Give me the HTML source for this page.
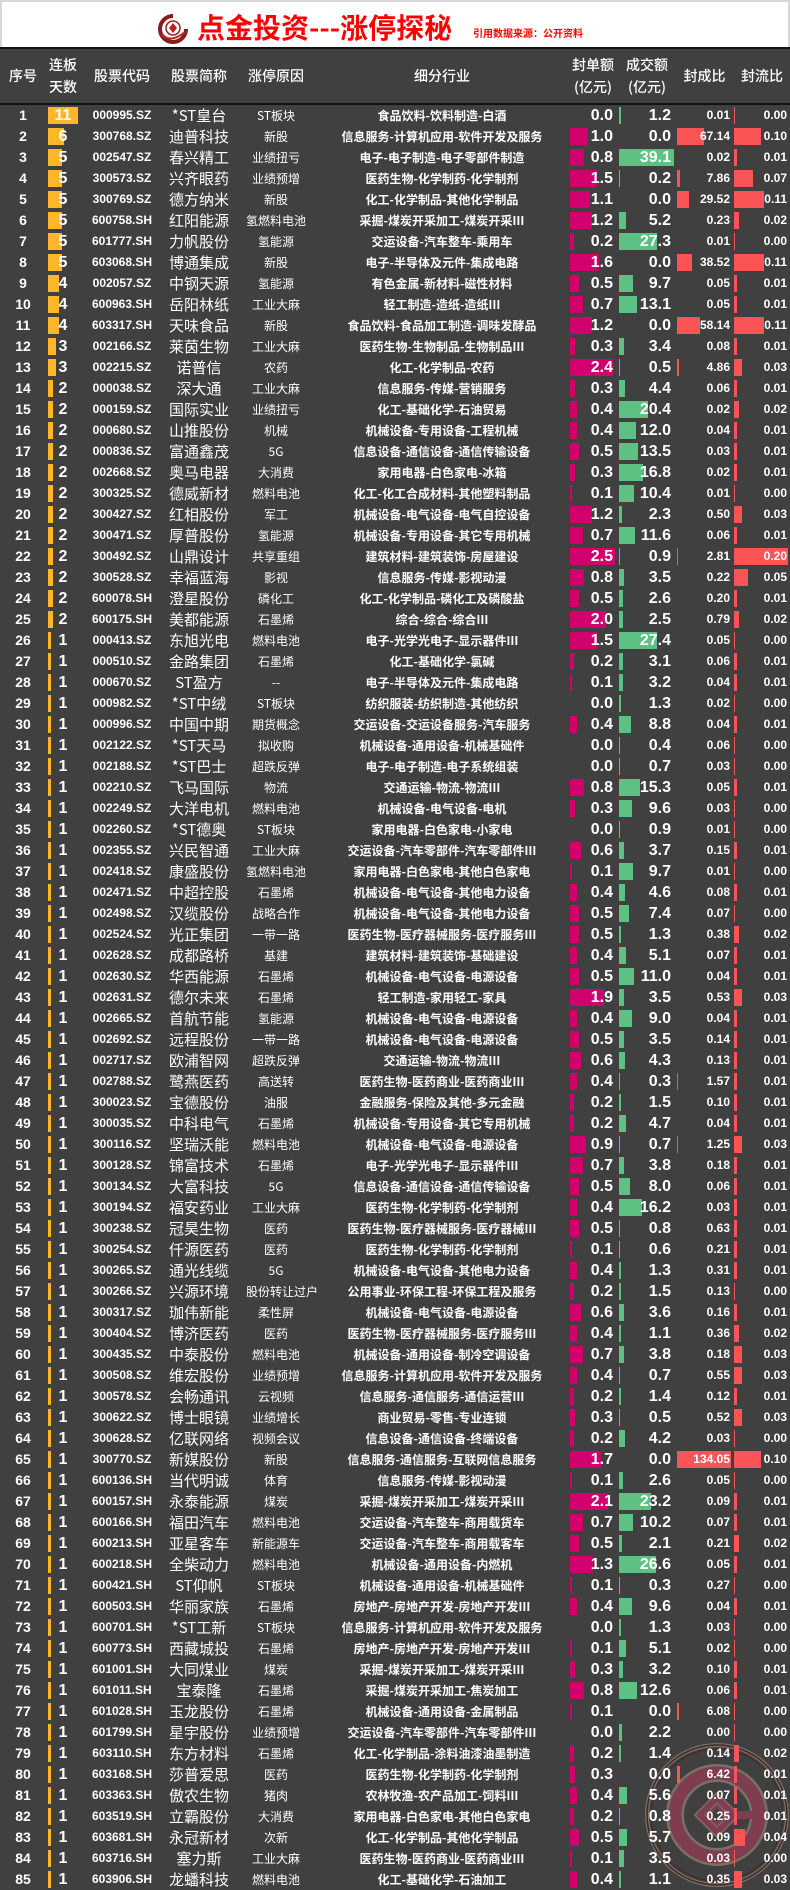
<!DOCTYPE html>
<html><head><meta charset="utf-8">
<style>
*{margin:0;padding:0;box-sizing:border-box}
body{width:790px;height:1890px;background:#404040;font-family:"Liberation Sans","Noto Sans CJK SC",sans-serif;color:#fff;overflow:hidden;position:relative}
#top{position:absolute;left:0;top:0;width:790px;height:47px;background:#fff;border-top:2px solid #d8d8d8;border-left:2px solid #d8d8d8;border-right:2px solid #d8d8d8}
#title{position:absolute;left:197px;top:9px;font-size:28px;font-weight:bold;color:#f00;white-space:nowrap;font-family:"Noto Sans CJK SC",sans-serif;line-height:36px}
#src{position:absolute;left:473px;top:25px;font-size:10px;font-weight:bold;color:#f00;font-family:"Noto Sans CJK SC",sans-serif}
#hd{position:absolute;left:0;top:47px;width:790px;height:58px;background:#404040;border-top:2px solid #111;border-bottom:2px solid #111;font-family:"Noto Sans CJK SC",sans-serif;font-weight:500;font-size:14px}
#hd span{position:absolute;top:0;height:54px;display:flex;align-items:center;justify-content:center;text-align:center;line-height:22px}
#rows{position:absolute;left:0;top:105px;width:790px}
.r{position:relative;height:21px;font-weight:bold}
.r span{position:absolute;top:0;height:21px;line-height:21px;white-space:nowrap}
.a{left:0;width:46px;text-align:center;font-size:14px}
.b{left:46px;width:34px;text-align:center;font-size:16px}
.b::before{content:"";position:absolute;left:2px;top:2px;height:17px;width:calc(var(--v)*2.7px);background:#ffb628;z-index:-1}
.b{z-index:1}
.c{left:90px;width:64px;text-align:center;font-size:12px}
.d{left:150px;width:98px;text-align:center;font-size:15px;font-weight:normal;font-family:"Noto Sans CJK SC",sans-serif}
.e{left:246px;width:60px;text-align:center;font-size:12px;font-weight:normal;font-family:"Noto Sans CJK SC",sans-serif}
.f{left:312px;width:260px;text-align:center;font-size:12px;font-family:"Noto Sans CJK SC",sans-serif}
.g,.h,.i,.j{text-align:right}
.g{left:570px;width:47px;padding-right:4px;font-size:16px}
.h{left:619px;width:56px;padding-right:4px;font-size:16px}
.i{left:677px;width:55px;padding-right:2px;font-size:12px}
.j{left:734px;width:56px;padding-right:3px;font-size:12px}
.g::before,.h::before,.i::before,.j::before{content:"";position:absolute;left:0;top:2px;height:17px;z-index:-1}
.g::before{width:calc(var(--v)*18px);background:#d2006e}
.h::before{width:calc(var(--v)*1.4px);background:#5ec184}
.i::before{width:calc(var(--v)*0.4px);background:#fa5457}
.j::before{width:max(1px,calc(var(--v)*270px));background:#fa5457}
.g,.h,.i,.j{z-index:1}
#wm{position:absolute;left:640px;top:1740px;opacity:.7}
</style></head><body>
<div id="top"></div>
<svg style="position:absolute;left:158px;top:14px" width="30" height="30" viewBox="0 0 30 30">
<path d="M15 2 A13 13 0 1 0 28 15" fill="none" stroke="#8b1a1a" stroke-width="4"/>
<path d="M4 20 Q12 30 27 18" fill="none" stroke="#a83030" stroke-width="2"/>
<circle cx="15" cy="14" r="7" fill="none" stroke="#9b2020" stroke-width="1.5"/>
<path d="M15 9 L19 14 L15 19 L11 14Z" fill="#c02020"/>
</svg>
<div id="title">点金投资---涨停探秘</div>
<div id="src">引用数据来源：公开资料</div>
<div id="hd">
<span style="left:0;width:46px">序号</span>
<span style="left:46px;width:34px">连板<br>天数</span>
<span style="left:90px;width:64px">股票代码</span>
<span style="left:150px;width:98px">股票简称</span>
<span style="left:246px;width:60px">涨停原因</span>
<span style="left:312px;width:260px">细分行业</span>
<span style="left:568px;width:50px">封单额<br>(亿元)</span>
<span style="left:620px;width:54px">成交额<br>(亿元)</span>
<span style="left:677px;width:55px">封成比</span>
<span style="left:734px;width:56px">封流比</span>
</div>
<div id="rows">
<div class="r"><span class="a">1</span><span class="b" style="--v:11">11</span><span class="c">000995.SZ</span><span class="d">*ST皇台</span><span class="e">ST板块</span><span class="f">食品饮料-饮料制造-白酒</span><span class="g" style="--v:0">0.0</span><span class="h" style="--v:1.2">1.2</span><span class="i" style="--v:0">0.01</span><span class="j" style="--v:0">0.00</span></div>
<div class="r"><span class="a">2</span><span class="b" style="--v:6">6</span><span class="c">300768.SZ</span><span class="d">迪普科技</span><span class="e">新股</span><span class="f">信息服务-计算机应用-软件开发及服务</span><span class="g" style="--v:1.0">1.0</span><span class="h" style="--v:0">0.0</span><span class="i" style="--v:67.14">67.14</span><span class="j" style="--v:0.10">0.10</span></div>
<div class="r"><span class="a">3</span><span class="b" style="--v:5">5</span><span class="c">002547.SZ</span><span class="d">春兴精工</span><span class="e">业绩扭亏</span><span class="f">电子-电子制造-电子零部件制造</span><span class="g" style="--v:0.8">0.8</span><span class="h" style="--v:39.1">39.1</span><span class="i" style="--v:0">0.02</span><span class="j" style="--v:0.01">0.01</span></div>
<div class="r"><span class="a">4</span><span class="b" style="--v:5">5</span><span class="c">300573.SZ</span><span class="d">兴齐眼药</span><span class="e">业绩预增</span><span class="f">医药生物-化学制药-化学制剂</span><span class="g" style="--v:1.5">1.5</span><span class="h" style="--v:0.2">0.2</span><span class="i" style="--v:7.86">7.86</span><span class="j" style="--v:0.07">0.07</span></div>
<div class="r"><span class="a">5</span><span class="b" style="--v:5">5</span><span class="c">300769.SZ</span><span class="d">德方纳米</span><span class="e">新股</span><span class="f">化工-化学制品-其他化学制品</span><span class="g" style="--v:1.1">1.1</span><span class="h" style="--v:0">0.0</span><span class="i" style="--v:29.52">29.52</span><span class="j" style="--v:0.11">0.11</span></div>
<div class="r"><span class="a">6</span><span class="b" style="--v:5">5</span><span class="c">600758.SH</span><span class="d">红阳能源</span><span class="e">氢燃料电池</span><span class="f">采掘-煤炭开采加工-煤炭开采Ⅲ</span><span class="g" style="--v:1.2">1.2</span><span class="h" style="--v:5.2">5.2</span><span class="i" style="--v:0">0.23</span><span class="j" style="--v:0.02">0.02</span></div>
<div class="r"><span class="a">7</span><span class="b" style="--v:5">5</span><span class="c">601777.SH</span><span class="d">力帆股份</span><span class="e">氢能源</span><span class="f">交运设备-汽车整车-乘用车</span><span class="g" style="--v:0.2">0.2</span><span class="h" style="--v:27.3">27.3</span><span class="i" style="--v:0">0.01</span><span class="j" style="--v:0">0.00</span></div>
<div class="r"><span class="a">8</span><span class="b" style="--v:5">5</span><span class="c">603068.SH</span><span class="d">博通集成</span><span class="e">新股</span><span class="f">电子-半导体及元件-集成电路</span><span class="g" style="--v:1.6">1.6</span><span class="h" style="--v:0">0.0</span><span class="i" style="--v:38.52">38.52</span><span class="j" style="--v:0.11">0.11</span></div>
<div class="r"><span class="a">9</span><span class="b" style="--v:4">4</span><span class="c">002057.SZ</span><span class="d">中钢天源</span><span class="e">氢能源</span><span class="f">有色金属-新材料-磁性材料</span><span class="g" style="--v:0.5">0.5</span><span class="h" style="--v:9.7">9.7</span><span class="i" style="--v:0">0.05</span><span class="j" style="--v:0.01">0.01</span></div>
<div class="r"><span class="a">10</span><span class="b" style="--v:4">4</span><span class="c">600963.SH</span><span class="d">岳阳林纸</span><span class="e">工业大麻</span><span class="f">轻工制造-造纸-造纸Ⅲ</span><span class="g" style="--v:0.7">0.7</span><span class="h" style="--v:13.1">13.1</span><span class="i" style="--v:0">0.05</span><span class="j" style="--v:0.01">0.01</span></div>
<div class="r"><span class="a">11</span><span class="b" style="--v:4">4</span><span class="c">603317.SH</span><span class="d">天味食品</span><span class="e">新股</span><span class="f">食品饮料-食品加工制造-调味发酵品</span><span class="g" style="--v:1.2">1.2</span><span class="h" style="--v:0">0.0</span><span class="i" style="--v:58.14">58.14</span><span class="j" style="--v:0.11">0.11</span></div>
<div class="r"><span class="a">12</span><span class="b" style="--v:3">3</span><span class="c">002166.SZ</span><span class="d">莱茵生物</span><span class="e">工业大麻</span><span class="f">医药生物-生物制品-生物制品Ⅲ</span><span class="g" style="--v:0.3">0.3</span><span class="h" style="--v:3.4">3.4</span><span class="i" style="--v:0">0.08</span><span class="j" style="--v:0.01">0.01</span></div>
<div class="r"><span class="a">13</span><span class="b" style="--v:3">3</span><span class="c">002215.SZ</span><span class="d">诺普信</span><span class="e">农药</span><span class="f">化工-化学制品-农药</span><span class="g" style="--v:2.4">2.4</span><span class="h" style="--v:0.5">0.5</span><span class="i" style="--v:4.86">4.86</span><span class="j" style="--v:0.03">0.03</span></div>
<div class="r"><span class="a">14</span><span class="b" style="--v:2">2</span><span class="c">000038.SZ</span><span class="d">深大通</span><span class="e">工业大麻</span><span class="f">信息服务-传媒-营销服务</span><span class="g" style="--v:0.3">0.3</span><span class="h" style="--v:4.4">4.4</span><span class="i" style="--v:0">0.06</span><span class="j" style="--v:0.01">0.01</span></div>
<div class="r"><span class="a">15</span><span class="b" style="--v:2">2</span><span class="c">000159.SZ</span><span class="d">国际实业</span><span class="e">业绩扭亏</span><span class="f">化工-基础化学-石油贸易</span><span class="g" style="--v:0.4">0.4</span><span class="h" style="--v:20.4">20.4</span><span class="i" style="--v:0">0.02</span><span class="j" style="--v:0.02">0.02</span></div>
<div class="r"><span class="a">16</span><span class="b" style="--v:2">2</span><span class="c">000680.SZ</span><span class="d">山推股份</span><span class="e">机械</span><span class="f">机械设备-专用设备-工程机械</span><span class="g" style="--v:0.4">0.4</span><span class="h" style="--v:12.0">12.0</span><span class="i" style="--v:0">0.04</span><span class="j" style="--v:0.01">0.01</span></div>
<div class="r"><span class="a">17</span><span class="b" style="--v:2">2</span><span class="c">000836.SZ</span><span class="d">富通鑫茂</span><span class="e">5G</span><span class="f">信息设备-通信设备-通信传输设备</span><span class="g" style="--v:0.5">0.5</span><span class="h" style="--v:13.5">13.5</span><span class="i" style="--v:0">0.03</span><span class="j" style="--v:0.01">0.01</span></div>
<div class="r"><span class="a">18</span><span class="b" style="--v:2">2</span><span class="c">002668.SZ</span><span class="d">奥马电器</span><span class="e">大消费</span><span class="f">家用电器-白色家电-冰箱</span><span class="g" style="--v:0.3">0.3</span><span class="h" style="--v:16.8">16.8</span><span class="i" style="--v:0">0.02</span><span class="j" style="--v:0.01">0.01</span></div>
<div class="r"><span class="a">19</span><span class="b" style="--v:2">2</span><span class="c">300325.SZ</span><span class="d">德威新材</span><span class="e">燃料电池</span><span class="f">化工-化工合成材料-其他塑料制品</span><span class="g" style="--v:0.1">0.1</span><span class="h" style="--v:10.4">10.4</span><span class="i" style="--v:0">0.01</span><span class="j" style="--v:0">0.00</span></div>
<div class="r"><span class="a">20</span><span class="b" style="--v:2">2</span><span class="c">300427.SZ</span><span class="d">红相股份</span><span class="e">军工</span><span class="f">机械设备-电气设备-电气自控设备</span><span class="g" style="--v:1.2">1.2</span><span class="h" style="--v:2.3">2.3</span><span class="i" style="--v:0">0.50</span><span class="j" style="--v:0.03">0.03</span></div>
<div class="r"><span class="a">21</span><span class="b" style="--v:2">2</span><span class="c">300471.SZ</span><span class="d">厚普股份</span><span class="e">氢能源</span><span class="f">机械设备-专用设备-其它专用机械</span><span class="g" style="--v:0.7">0.7</span><span class="h" style="--v:11.6">11.6</span><span class="i" style="--v:0">0.06</span><span class="j" style="--v:0.01">0.01</span></div>
<div class="r"><span class="a">22</span><span class="b" style="--v:2">2</span><span class="c">300492.SZ</span><span class="d">山鼎设计</span><span class="e">共享重组</span><span class="f">建筑材料-建筑装饰-房屋建设</span><span class="g" style="--v:2.5">2.5</span><span class="h" style="--v:0.9">0.9</span><span class="i" style="--v:2.81">2.81</span><span class="j" style="--v:0.20">0.20</span></div>
<div class="r"><span class="a">23</span><span class="b" style="--v:2">2</span><span class="c">300528.SZ</span><span class="d">幸福蓝海</span><span class="e">影视</span><span class="f">信息服务-传媒-影视动漫</span><span class="g" style="--v:0.8">0.8</span><span class="h" style="--v:3.5">3.5</span><span class="i" style="--v:0">0.22</span><span class="j" style="--v:0.05">0.05</span></div>
<div class="r"><span class="a">24</span><span class="b" style="--v:2">2</span><span class="c">600078.SH</span><span class="d">澄星股份</span><span class="e">磷化工</span><span class="f">化工-化学制品-磷化工及磷酸盐</span><span class="g" style="--v:0.5">0.5</span><span class="h" style="--v:2.6">2.6</span><span class="i" style="--v:0">0.20</span><span class="j" style="--v:0.01">0.01</span></div>
<div class="r"><span class="a">25</span><span class="b" style="--v:2">2</span><span class="c">600175.SH</span><span class="d">美都能源</span><span class="e">石墨烯</span><span class="f">综合-综合-综合Ⅲ</span><span class="g" style="--v:2.0">2.0</span><span class="h" style="--v:2.5">2.5</span><span class="i" style="--v:0">0.79</span><span class="j" style="--v:0.02">0.02</span></div>
<div class="r"><span class="a">26</span><span class="b" style="--v:1">1</span><span class="c">000413.SZ</span><span class="d">东旭光电</span><span class="e">燃料电池</span><span class="f">电子-光学光电子-显示器件Ⅲ</span><span class="g" style="--v:1.5">1.5</span><span class="h" style="--v:27.4">27.4</span><span class="i" style="--v:0">0.05</span><span class="j" style="--v:0">0.00</span></div>
<div class="r"><span class="a">27</span><span class="b" style="--v:1">1</span><span class="c">000510.SZ</span><span class="d">金路集团</span><span class="e">石墨烯</span><span class="f">化工-基础化学-氯碱</span><span class="g" style="--v:0.2">0.2</span><span class="h" style="--v:3.1">3.1</span><span class="i" style="--v:0">0.06</span><span class="j" style="--v:0.01">0.01</span></div>
<div class="r"><span class="a">28</span><span class="b" style="--v:1">1</span><span class="c">000670.SZ</span><span class="d">ST盈方</span><span class="e">--</span><span class="f">电子-半导体及元件-集成电路</span><span class="g" style="--v:0.1">0.1</span><span class="h" style="--v:3.2">3.2</span><span class="i" style="--v:0">0.04</span><span class="j" style="--v:0.01">0.01</span></div>
<div class="r"><span class="a">29</span><span class="b" style="--v:1">1</span><span class="c">000982.SZ</span><span class="d">*ST中绒</span><span class="e">ST板块</span><span class="f">纺织服装-纺织制造-其他纺织</span><span class="g" style="--v:0">0.0</span><span class="h" style="--v:1.3">1.3</span><span class="i" style="--v:0">0.02</span><span class="j" style="--v:0">0.00</span></div>
<div class="r"><span class="a">30</span><span class="b" style="--v:1">1</span><span class="c">000996.SZ</span><span class="d">中国中期</span><span class="e">期货概念</span><span class="f">交运设备-交运设备服务-汽车服务</span><span class="g" style="--v:0.4">0.4</span><span class="h" style="--v:8.8">8.8</span><span class="i" style="--v:0">0.04</span><span class="j" style="--v:0.01">0.01</span></div>
<div class="r"><span class="a">31</span><span class="b" style="--v:1">1</span><span class="c">002122.SZ</span><span class="d">*ST天马</span><span class="e">拟收购</span><span class="f">机械设备-通用设备-机械基础件</span><span class="g" style="--v:0">0.0</span><span class="h" style="--v:0.4">0.4</span><span class="i" style="--v:0">0.06</span><span class="j" style="--v:0">0.00</span></div>
<div class="r"><span class="a">32</span><span class="b" style="--v:1">1</span><span class="c">002188.SZ</span><span class="d">*ST巴士</span><span class="e">超跌反弹</span><span class="f">电子-电子制造-电子系统组装</span><span class="g" style="--v:0">0.0</span><span class="h" style="--v:0.7">0.7</span><span class="i" style="--v:0">0.03</span><span class="j" style="--v:0">0.00</span></div>
<div class="r"><span class="a">33</span><span class="b" style="--v:1">1</span><span class="c">002210.SZ</span><span class="d">飞马国际</span><span class="e">物流</span><span class="f">交通运输-物流-物流Ⅲ</span><span class="g" style="--v:0.8">0.8</span><span class="h" style="--v:15.3">15.3</span><span class="i" style="--v:0">0.05</span><span class="j" style="--v:0.01">0.01</span></div>
<div class="r"><span class="a">34</span><span class="b" style="--v:1">1</span><span class="c">002249.SZ</span><span class="d">大洋电机</span><span class="e">燃料电池</span><span class="f">机械设备-电气设备-电机</span><span class="g" style="--v:0.3">0.3</span><span class="h" style="--v:9.6">9.6</span><span class="i" style="--v:0">0.03</span><span class="j" style="--v:0">0.00</span></div>
<div class="r"><span class="a">35</span><span class="b" style="--v:1">1</span><span class="c">002260.SZ</span><span class="d">*ST德奥</span><span class="e">ST板块</span><span class="f">家用电器-白色家电-小家电</span><span class="g" style="--v:0">0.0</span><span class="h" style="--v:0.9">0.9</span><span class="i" style="--v:0">0.01</span><span class="j" style="--v:0">0.00</span></div>
<div class="r"><span class="a">36</span><span class="b" style="--v:1">1</span><span class="c">002355.SZ</span><span class="d">兴民智通</span><span class="e">工业大麻</span><span class="f">交运设备-汽车零部件-汽车零部件Ⅲ</span><span class="g" style="--v:0.6">0.6</span><span class="h" style="--v:3.7">3.7</span><span class="i" style="--v:0">0.15</span><span class="j" style="--v:0.01">0.01</span></div>
<div class="r"><span class="a">37</span><span class="b" style="--v:1">1</span><span class="c">002418.SZ</span><span class="d">康盛股份</span><span class="e">氢燃料电池</span><span class="f">家用电器-白色家电-其他白色家电</span><span class="g" style="--v:0.1">0.1</span><span class="h" style="--v:9.7">9.7</span><span class="i" style="--v:0">0.01</span><span class="j" style="--v:0">0.00</span></div>
<div class="r"><span class="a">38</span><span class="b" style="--v:1">1</span><span class="c">002471.SZ</span><span class="d">中超控股</span><span class="e">石墨烯</span><span class="f">机械设备-电气设备-其他电力设备</span><span class="g" style="--v:0.4">0.4</span><span class="h" style="--v:4.6">4.6</span><span class="i" style="--v:0">0.08</span><span class="j" style="--v:0.01">0.01</span></div>
<div class="r"><span class="a">39</span><span class="b" style="--v:1">1</span><span class="c">002498.SZ</span><span class="d">汉缆股份</span><span class="e">战略合作</span><span class="f">机械设备-电气设备-其他电力设备</span><span class="g" style="--v:0.5">0.5</span><span class="h" style="--v:7.4">7.4</span><span class="i" style="--v:0">0.07</span><span class="j" style="--v:0">0.00</span></div>
<div class="r"><span class="a">40</span><span class="b" style="--v:1">1</span><span class="c">002524.SZ</span><span class="d">光正集团</span><span class="e">一带一路</span><span class="f">医药生物-医疗器械服务-医疗服务Ⅲ</span><span class="g" style="--v:0.5">0.5</span><span class="h" style="--v:1.3">1.3</span><span class="i" style="--v:0">0.38</span><span class="j" style="--v:0.02">0.02</span></div>
<div class="r"><span class="a">41</span><span class="b" style="--v:1">1</span><span class="c">002628.SZ</span><span class="d">成都路桥</span><span class="e">基建</span><span class="f">建筑材料-建筑装饰-基础建设</span><span class="g" style="--v:0.4">0.4</span><span class="h" style="--v:5.1">5.1</span><span class="i" style="--v:0">0.07</span><span class="j" style="--v:0.01">0.01</span></div>
<div class="r"><span class="a">42</span><span class="b" style="--v:1">1</span><span class="c">002630.SZ</span><span class="d">华西能源</span><span class="e">石墨烯</span><span class="f">机械设备-电气设备-电源设备</span><span class="g" style="--v:0.5">0.5</span><span class="h" style="--v:11.0">11.0</span><span class="i" style="--v:0">0.04</span><span class="j" style="--v:0.01">0.01</span></div>
<div class="r"><span class="a">43</span><span class="b" style="--v:1">1</span><span class="c">002631.SZ</span><span class="d">德尔未来</span><span class="e">石墨烯</span><span class="f">轻工制造-家用轻工-家具</span><span class="g" style="--v:1.9">1.9</span><span class="h" style="--v:3.5">3.5</span><span class="i" style="--v:0">0.53</span><span class="j" style="--v:0.03">0.03</span></div>
<div class="r"><span class="a">44</span><span class="b" style="--v:1">1</span><span class="c">002665.SZ</span><span class="d">首航节能</span><span class="e">氢能源</span><span class="f">机械设备-电气设备-电源设备</span><span class="g" style="--v:0.4">0.4</span><span class="h" style="--v:9.0">9.0</span><span class="i" style="--v:0">0.04</span><span class="j" style="--v:0.01">0.01</span></div>
<div class="r"><span class="a">45</span><span class="b" style="--v:1">1</span><span class="c">002692.SZ</span><span class="d">远程股份</span><span class="e">一带一路</span><span class="f">机械设备-电气设备-电源设备</span><span class="g" style="--v:0.5">0.5</span><span class="h" style="--v:3.5">3.5</span><span class="i" style="--v:0">0.14</span><span class="j" style="--v:0.01">0.01</span></div>
<div class="r"><span class="a">46</span><span class="b" style="--v:1">1</span><span class="c">002717.SZ</span><span class="d">欧浦智网</span><span class="e">超跌反弹</span><span class="f">交通运输-物流-物流Ⅲ</span><span class="g" style="--v:0.6">0.6</span><span class="h" style="--v:4.3">4.3</span><span class="i" style="--v:0">0.13</span><span class="j" style="--v:0.01">0.01</span></div>
<div class="r"><span class="a">47</span><span class="b" style="--v:1">1</span><span class="c">002788.SZ</span><span class="d">鹭燕医药</span><span class="e">高送转</span><span class="f">医药生物-医药商业-医药商业Ⅲ</span><span class="g" style="--v:0.4">0.4</span><span class="h" style="--v:0.3">0.3</span><span class="i" style="--v:1.57">1.57</span><span class="j" style="--v:0.01">0.01</span></div>
<div class="r"><span class="a">48</span><span class="b" style="--v:1">1</span><span class="c">300023.SZ</span><span class="d">宝德股份</span><span class="e">油服</span><span class="f">金融服务-保险及其他-多元金融</span><span class="g" style="--v:0.2">0.2</span><span class="h" style="--v:1.5">1.5</span><span class="i" style="--v:0">0.10</span><span class="j" style="--v:0.01">0.01</span></div>
<div class="r"><span class="a">49</span><span class="b" style="--v:1">1</span><span class="c">300035.SZ</span><span class="d">中科电气</span><span class="e">石墨烯</span><span class="f">机械设备-专用设备-其它专用机械</span><span class="g" style="--v:0.2">0.2</span><span class="h" style="--v:4.7">4.7</span><span class="i" style="--v:0">0.04</span><span class="j" style="--v:0.01">0.01</span></div>
<div class="r"><span class="a">50</span><span class="b" style="--v:1">1</span><span class="c">300116.SZ</span><span class="d">坚瑞沃能</span><span class="e">燃料电池</span><span class="f">机械设备-电气设备-电源设备</span><span class="g" style="--v:0.9">0.9</span><span class="h" style="--v:0.7">0.7</span><span class="i" style="--v:1.25">1.25</span><span class="j" style="--v:0.03">0.03</span></div>
<div class="r"><span class="a">51</span><span class="b" style="--v:1">1</span><span class="c">300128.SZ</span><span class="d">锦富技术</span><span class="e">石墨烯</span><span class="f">电子-光学光电子-显示器件Ⅲ</span><span class="g" style="--v:0.7">0.7</span><span class="h" style="--v:3.8">3.8</span><span class="i" style="--v:0">0.18</span><span class="j" style="--v:0.01">0.01</span></div>
<div class="r"><span class="a">52</span><span class="b" style="--v:1">1</span><span class="c">300134.SZ</span><span class="d">大富科技</span><span class="e">5G</span><span class="f">信息设备-通信设备-通信传输设备</span><span class="g" style="--v:0.5">0.5</span><span class="h" style="--v:8.0">8.0</span><span class="i" style="--v:0">0.06</span><span class="j" style="--v:0.01">0.01</span></div>
<div class="r"><span class="a">53</span><span class="b" style="--v:1">1</span><span class="c">300194.SZ</span><span class="d">福安药业</span><span class="e">工业大麻</span><span class="f">医药生物-化学制药-化学制剂</span><span class="g" style="--v:0.4">0.4</span><span class="h" style="--v:16.2">16.2</span><span class="i" style="--v:0">0.03</span><span class="j" style="--v:0.01">0.01</span></div>
<div class="r"><span class="a">54</span><span class="b" style="--v:1">1</span><span class="c">300238.SZ</span><span class="d">冠昊生物</span><span class="e">医药</span><span class="f">医药生物-医疗器械服务-医疗器械Ⅲ</span><span class="g" style="--v:0.5">0.5</span><span class="h" style="--v:0.8">0.8</span><span class="i" style="--v:0">0.63</span><span class="j" style="--v:0.01">0.01</span></div>
<div class="r"><span class="a">55</span><span class="b" style="--v:1">1</span><span class="c">300254.SZ</span><span class="d">仟源医药</span><span class="e">医药</span><span class="f">医药生物-化学制药-化学制剂</span><span class="g" style="--v:0.1">0.1</span><span class="h" style="--v:0.6">0.6</span><span class="i" style="--v:0">0.21</span><span class="j" style="--v:0.01">0.01</span></div>
<div class="r"><span class="a">56</span><span class="b" style="--v:1">1</span><span class="c">300265.SZ</span><span class="d">通光线缆</span><span class="e">5G</span><span class="f">机械设备-电气设备-其他电力设备</span><span class="g" style="--v:0.4">0.4</span><span class="h" style="--v:1.3">1.3</span><span class="i" style="--v:0">0.31</span><span class="j" style="--v:0.01">0.01</span></div>
<div class="r"><span class="a">57</span><span class="b" style="--v:1">1</span><span class="c">300266.SZ</span><span class="d">兴源环境</span><span class="e">股份转让过户</span><span class="f">公用事业-环保工程-环保工程及服务</span><span class="g" style="--v:0.2">0.2</span><span class="h" style="--v:1.5">1.5</span><span class="i" style="--v:0">0.13</span><span class="j" style="--v:0">0.00</span></div>
<div class="r"><span class="a">58</span><span class="b" style="--v:1">1</span><span class="c">300317.SZ</span><span class="d">珈伟新能</span><span class="e">柔性屏</span><span class="f">机械设备-电气设备-电源设备</span><span class="g" style="--v:0.6">0.6</span><span class="h" style="--v:3.6">3.6</span><span class="i" style="--v:0">0.16</span><span class="j" style="--v:0.01">0.01</span></div>
<div class="r"><span class="a">59</span><span class="b" style="--v:1">1</span><span class="c">300404.SZ</span><span class="d">博济医药</span><span class="e">医药</span><span class="f">医药生物-医疗器械服务-医疗服务Ⅲ</span><span class="g" style="--v:0.4">0.4</span><span class="h" style="--v:1.1">1.1</span><span class="i" style="--v:0">0.36</span><span class="j" style="--v:0.02">0.02</span></div>
<div class="r"><span class="a">60</span><span class="b" style="--v:1">1</span><span class="c">300435.SZ</span><span class="d">中泰股份</span><span class="e">燃料电池</span><span class="f">机械设备-通用设备-制冷空调设备</span><span class="g" style="--v:0.7">0.7</span><span class="h" style="--v:3.8">3.8</span><span class="i" style="--v:0">0.18</span><span class="j" style="--v:0.03">0.03</span></div>
<div class="r"><span class="a">61</span><span class="b" style="--v:1">1</span><span class="c">300508.SZ</span><span class="d">维宏股份</span><span class="e">业绩预增</span><span class="f">信息服务-计算机应用-软件开发及服务</span><span class="g" style="--v:0.4">0.4</span><span class="h" style="--v:0.7">0.7</span><span class="i" style="--v:0">0.55</span><span class="j" style="--v:0.03">0.03</span></div>
<div class="r"><span class="a">62</span><span class="b" style="--v:1">1</span><span class="c">300578.SZ</span><span class="d">会畅通讯</span><span class="e">云视频</span><span class="f">信息服务-通信服务-通信运营Ⅲ</span><span class="g" style="--v:0.2">0.2</span><span class="h" style="--v:1.4">1.4</span><span class="i" style="--v:0">0.12</span><span class="j" style="--v:0.01">0.01</span></div>
<div class="r"><span class="a">63</span><span class="b" style="--v:1">1</span><span class="c">300622.SZ</span><span class="d">博士眼镜</span><span class="e">业绩增长</span><span class="f">商业贸易-零售-专业连锁</span><span class="g" style="--v:0.3">0.3</span><span class="h" style="--v:0.5">0.5</span><span class="i" style="--v:0">0.52</span><span class="j" style="--v:0.03">0.03</span></div>
<div class="r"><span class="a">64</span><span class="b" style="--v:1">1</span><span class="c">300628.SZ</span><span class="d">亿联网络</span><span class="e">视频会议</span><span class="f">信息设备-通信设备-终端设备</span><span class="g" style="--v:0.2">0.2</span><span class="h" style="--v:4.2">4.2</span><span class="i" style="--v:0">0.03</span><span class="j" style="--v:0">0.00</span></div>
<div class="r"><span class="a">65</span><span class="b" style="--v:1">1</span><span class="c">300770.SZ</span><span class="d">新媒股份</span><span class="e">新股</span><span class="f">信息服务-通信服务-互联网信息服务</span><span class="g" style="--v:1.7">1.7</span><span class="h" style="--v:0">0.0</span><span class="i" style="--v:134.05">134.05</span><span class="j" style="--v:0.10">0.10</span></div>
<div class="r"><span class="a">66</span><span class="b" style="--v:1">1</span><span class="c">600136.SH</span><span class="d">当代明诚</span><span class="e">体育</span><span class="f">信息服务-传媒-影视动漫</span><span class="g" style="--v:0.1">0.1</span><span class="h" style="--v:2.6">2.6</span><span class="i" style="--v:0">0.05</span><span class="j" style="--v:0">0.00</span></div>
<div class="r"><span class="a">67</span><span class="b" style="--v:1">1</span><span class="c">600157.SH</span><span class="d">永泰能源</span><span class="e">煤炭</span><span class="f">采掘-煤炭开采加工-煤炭开采Ⅲ</span><span class="g" style="--v:2.1">2.1</span><span class="h" style="--v:23.2">23.2</span><span class="i" style="--v:0">0.09</span><span class="j" style="--v:0.01">0.01</span></div>
<div class="r"><span class="a">68</span><span class="b" style="--v:1">1</span><span class="c">600166.SH</span><span class="d">福田汽车</span><span class="e">燃料电池</span><span class="f">交运设备-汽车整车-商用载货车</span><span class="g" style="--v:0.7">0.7</span><span class="h" style="--v:10.2">10.2</span><span class="i" style="--v:0">0.07</span><span class="j" style="--v:0.01">0.01</span></div>
<div class="r"><span class="a">69</span><span class="b" style="--v:1">1</span><span class="c">600213.SH</span><span class="d">亚星客车</span><span class="e">新能源车</span><span class="f">交运设备-汽车整车-商用载客车</span><span class="g" style="--v:0.5">0.5</span><span class="h" style="--v:2.1">2.1</span><span class="i" style="--v:0">0.21</span><span class="j" style="--v:0.02">0.02</span></div>
<div class="r"><span class="a">70</span><span class="b" style="--v:1">1</span><span class="c">600218.SH</span><span class="d">全柴动力</span><span class="e">燃料电池</span><span class="f">机械设备-通用设备-内燃机</span><span class="g" style="--v:1.3">1.3</span><span class="h" style="--v:26.6">26.6</span><span class="i" style="--v:0">0.05</span><span class="j" style="--v:0.01">0.01</span></div>
<div class="r"><span class="a">71</span><span class="b" style="--v:1">1</span><span class="c">600421.SH</span><span class="d">ST仰帆</span><span class="e">ST板块</span><span class="f">机械设备-通用设备-机械基础件</span><span class="g" style="--v:0.1">0.1</span><span class="h" style="--v:0.3">0.3</span><span class="i" style="--v:0">0.27</span><span class="j" style="--v:0">0.00</span></div>
<div class="r"><span class="a">72</span><span class="b" style="--v:1">1</span><span class="c">600503.SH</span><span class="d">华丽家族</span><span class="e">石墨烯</span><span class="f">房地产-房地产开发-房地产开发Ⅲ</span><span class="g" style="--v:0.4">0.4</span><span class="h" style="--v:9.6">9.6</span><span class="i" style="--v:0">0.04</span><span class="j" style="--v:0.01">0.01</span></div>
<div class="r"><span class="a">73</span><span class="b" style="--v:1">1</span><span class="c">600701.SH</span><span class="d">*ST工新</span><span class="e">ST板块</span><span class="f">信息服务-计算机应用-软件开发及服务</span><span class="g" style="--v:0">0.0</span><span class="h" style="--v:1.3">1.3</span><span class="i" style="--v:0">0.03</span><span class="j" style="--v:0">0.00</span></div>
<div class="r"><span class="a">74</span><span class="b" style="--v:1">1</span><span class="c">600773.SH</span><span class="d">西藏城投</span><span class="e">石墨烯</span><span class="f">房地产-房地产开发-房地产开发Ⅲ</span><span class="g" style="--v:0.1">0.1</span><span class="h" style="--v:5.1">5.1</span><span class="i" style="--v:0">0.02</span><span class="j" style="--v:0">0.00</span></div>
<div class="r"><span class="a">75</span><span class="b" style="--v:1">1</span><span class="c">601001.SH</span><span class="d">大同煤业</span><span class="e">煤炭</span><span class="f">采掘-煤炭开采加工-煤炭开采Ⅲ</span><span class="g" style="--v:0.3">0.3</span><span class="h" style="--v:3.2">3.2</span><span class="i" style="--v:0">0.10</span><span class="j" style="--v:0.01">0.01</span></div>
<div class="r"><span class="a">76</span><span class="b" style="--v:1">1</span><span class="c">601011.SH</span><span class="d">宝泰隆</span><span class="e">石墨烯</span><span class="f">采掘-煤炭开采加工-焦炭加工</span><span class="g" style="--v:0.8">0.8</span><span class="h" style="--v:12.6">12.6</span><span class="i" style="--v:0">0.06</span><span class="j" style="--v:0.01">0.01</span></div>
<div class="r"><span class="a">77</span><span class="b" style="--v:1">1</span><span class="c">601028.SH</span><span class="d">玉龙股份</span><span class="e">石墨烯</span><span class="f">机械设备-通用设备-金属制品</span><span class="g" style="--v:0.1">0.1</span><span class="h" style="--v:0">0.0</span><span class="i" style="--v:6.08">6.08</span><span class="j" style="--v:0">0.00</span></div>
<div class="r"><span class="a">78</span><span class="b" style="--v:1">1</span><span class="c">601799.SH</span><span class="d">星宇股份</span><span class="e">业绩预增</span><span class="f">交运设备-汽车零部件-汽车零部件Ⅲ</span><span class="g" style="--v:0">0.0</span><span class="h" style="--v:2.2">2.2</span><span class="i" style="--v:0">0.00</span><span class="j" style="--v:0">0.00</span></div>
<div class="r"><span class="a">79</span><span class="b" style="--v:1">1</span><span class="c">603110.SH</span><span class="d">东方材料</span><span class="e">石墨烯</span><span class="f">化工-化学制品-涂料油漆油墨制造</span><span class="g" style="--v:0.2">0.2</span><span class="h" style="--v:1.4">1.4</span><span class="i" style="--v:0">0.14</span><span class="j" style="--v:0.02">0.02</span></div>
<div class="r"><span class="a">80</span><span class="b" style="--v:1">1</span><span class="c">603168.SH</span><span class="d">莎普爱思</span><span class="e">医药</span><span class="f">医药生物-化学制药-化学制剂</span><span class="g" style="--v:0.3">0.3</span><span class="h" style="--v:0">0.0</span><span class="i" style="--v:6.42">6.42</span><span class="j" style="--v:0.01">0.01</span></div>
<div class="r"><span class="a">81</span><span class="b" style="--v:1">1</span><span class="c">603363.SH</span><span class="d">傲农生物</span><span class="e">猪肉</span><span class="f">农林牧渔-农产品加工-饲料Ⅲ</span><span class="g" style="--v:0.4">0.4</span><span class="h" style="--v:5.6">5.6</span><span class="i" style="--v:0">0.07</span><span class="j" style="--v:0.01">0.01</span></div>
<div class="r"><span class="a">82</span><span class="b" style="--v:1">1</span><span class="c">603519.SH</span><span class="d">立霸股份</span><span class="e">大消费</span><span class="f">家用电器-白色家电-其他白色家电</span><span class="g" style="--v:0.2">0.2</span><span class="h" style="--v:0.8">0.8</span><span class="i" style="--v:0">0.25</span><span class="j" style="--v:0.01">0.01</span></div>
<div class="r"><span class="a">83</span><span class="b" style="--v:1">1</span><span class="c">603681.SH</span><span class="d">永冠新材</span><span class="e">次新</span><span class="f">化工-化学制品-其他化学制品</span><span class="g" style="--v:0.5">0.5</span><span class="h" style="--v:5.7">5.7</span><span class="i" style="--v:0">0.09</span><span class="j" style="--v:0.04">0.04</span></div>
<div class="r"><span class="a">84</span><span class="b" style="--v:1">1</span><span class="c">603716.SH</span><span class="d">塞力斯</span><span class="e">工业大麻</span><span class="f">医药生物-医药商业-医药商业Ⅲ</span><span class="g" style="--v:0.1">0.1</span><span class="h" style="--v:3.5">3.5</span><span class="i" style="--v:0">0.03</span><span class="j" style="--v:0">0.00</span></div>
<div class="r"><span class="a">85</span><span class="b" style="--v:1">1</span><span class="c">603906.SH</span><span class="d">龙蟠科技</span><span class="e">燃料电池</span><span class="f">化工-基础化学-石油加工</span><span class="g" style="--v:0.4">0.4</span><span class="h" style="--v:1.1">1.1</span><span class="i" style="--v:0">0.35</span><span class="j" style="--v:0.03">0.03</span></div>
</div>
<svg id="wm" width="150" height="150" viewBox="0 0 150 150">
<circle cx="77" cy="75" r="70" fill="none" stroke="#d9d0a8" stroke-width="4" opacity=".5"/>
<circle cx="77" cy="75" r="70" fill="none" stroke="#4a1a22" stroke-width="1.5"/>
<circle cx="77" cy="75" r="66" fill="none" stroke="#4a1a22" stroke-width="1"/>
<circle cx="77" cy="75" r="42" fill="none" stroke="#d9d0a8" stroke-width="18" opacity=".5"/>
<circle cx="77" cy="75" r="42" fill="none" stroke="#9c3d57" stroke-width="13"/>
<path d="M60 75 L77 58 L94 75 L77 92 Z" fill="none" stroke="#d9d0a8" stroke-width="9" opacity=".5"/>
<path d="M60 75 L77 58 L94 75 L77 92 Z" fill="none" stroke="#9c3d57" stroke-width="6"/>
<path d="M68 75 L77 66 L86 75 L77 84 Z" fill="none" stroke="#9c3d57" stroke-width="3"/>
<path d="M94 75 L120 75" stroke="#9c3d57" stroke-width="8"/>
</svg>
</body></html>
